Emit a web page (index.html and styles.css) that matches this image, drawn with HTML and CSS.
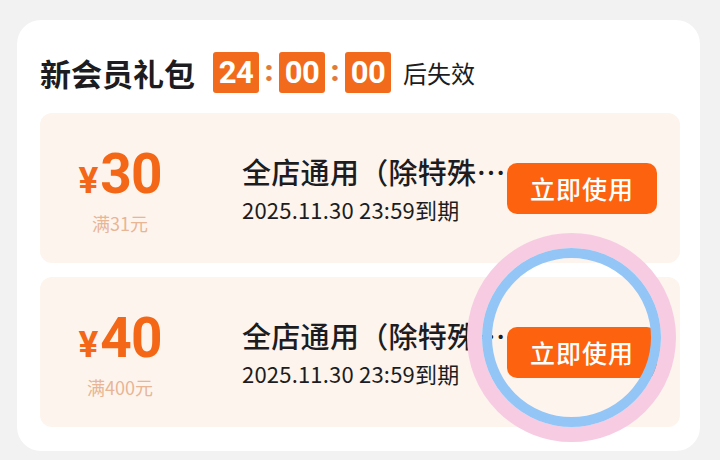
FILE: index.html
```html
<!DOCTYPE html>
<html lang="zh-CN">
<head>
<meta charset="utf-8">
<title>新会员礼包</title>
<link rel="stylesheet" href="styles.css">
</head>
<body>
<div class="card">
  <div class="header">
    <h1 class="title">新会员礼包</h1>
    <div class="countdown">
      <span class="box">24</span><span class="colon">:</span><span class="box">00</span><span class="colon">:</span><span class="box">00</span>
    </div>
    <span class="suffix">后失效</span>
  </div>
  <div class="coupons">
    <div class="coupon">
      <div class="amount">
        <div class="value"><span class="yen">¥</span><span class="num">30</span></div>
        <div class="cond">满31元</div>
      </div>
      <div class="info">
        <div class="name">全店通用（除特殊商品外）</div>
        <div class="date">2025.11.30 23:59到期</div>
      </div>
      <button class="use">立即使用</button>
    </div>
    <div class="coupon">
      <div class="amount">
        <div class="value"><span class="yen">¥</span><span class="num">40</span></div>
        <div class="cond">满400元</div>
      </div>
      <div class="info">
        <div class="name">全店通用（除特殊商品外）</div>
        <div class="date">2025.11.30 23:59到期</div>
      </div>
      <button class="use">立即使用</button>
    </div>
  </div>
  <div class="touch"><div class="touch-inner"></div></div>
</div>
</body>
</html>
```
FILE: styles.css
```css
* { box-sizing: border-box; }
html, body { margin: 0; padding: 0; }
body {
  width: 720px;
  height: 460px;
  background: #f2f2f2;
  font-family: "Noto Sans CJK SC", "Noto Sans", sans-serif;
  color: #1e1e23;
  overflow: hidden;
}
.card {
  position: relative;
  margin: 20px 20px 0 17px;
  width: 683px;
  height: 431px;
  background: #ffffff;
  border-radius: 24px;
  padding: 32px 20px 24px 23px;
}
.header {
  display: flex;
  align-items: center;
  height: 41px;
}
.title {
  margin: 0 18px 0 0;
  font-size: 31px;
  font-weight: 700;
  line-height: 41px;
  color: #1c1c21;
}
.countdown {
  display: flex;
  align-items: center;
}
.box {
  width: 46px;
  height: 41px;
  border-radius: 3px;
  background: #f26a1c;
  color: #ffffff;
  font-family: "Roboto", sans-serif;
  font-weight: 700;
  font-size: 31px;
  line-height: 41px;
  text-align: center;
  letter-spacing: -0.5px;
}
.colon {
  width: 20px;
  text-align: center;
  color: #e27a3c;
  font-family: "Roboto", sans-serif;
  font-weight: 900;
  font-size: 30px;
  line-height: 38px;
  height: 41px;
}
.suffix {
  margin-left: 12px;
  font-size: 24px;
  line-height: 41px;
  color: #1c1c21;
}
.coupons {
  margin-top: 20px;
  display: flex;
  flex-direction: column;
  gap: 14px;
}
.coupon {
  height: 150px;
  background: #fdf4ee;
  border-radius: 12px;
  display: flex;
  align-items: center;
  padding-right: 23px;
}
.amount {
  width: 160px;
  flex: none;
  display: flex;
  flex-direction: column;
  align-items: center;
  padding-top: 4px;
}
.value {
  color: #f36716;
  font-family: "Roboto", sans-serif;
  font-weight: 700;
  line-height: 56px;
  white-space: nowrap;
}
.yen {
  font-size: 37px;
  margin-right: 2px;
}
.num {
  font-size: 55px;
  letter-spacing: -1px;
}
.cond {
  margin-top: -5px;
  font-size: 18px;
  line-height: 24px;
  color: #e8b595;
}
.info {
  flex: 1;
  min-width: 0;
  margin-left: 42px;
  padding-top: 2px;
}
.name {
  font-size: 29px;
  font-weight: 500;
  line-height: 34px;
  letter-spacing: 0.3px;
  white-space: nowrap;
  overflow: hidden;
  text-overflow: ellipsis;
  color: #1c1c21;
}
.date {
  margin-top: 5px;
  font-size: 22px;
  line-height: 32px;
  letter-spacing: 0.2px;
  color: #1c1c21;
  white-space: nowrap;
}
.use {
  flex: none;
  width: 150px;
  height: 51px;
  border: none;
  border-radius: 10px;
  background: #fd630f;
  color: #ffffff;
  font-family: "Noto Sans CJK SC", sans-serif;
  font-size: 25px;
  font-weight: 500;
  padding: 0;
  letter-spacing: 1px;
}
.touch {
  position: absolute;
  left: 450px;
  top: 213px;
  width: 209px;
  height: 209px;
  border-radius: 50%;
  border: 15px solid #f7cce3;
}
.touch-inner {
  width: 100%;
  height: 100%;
  border-radius: 50%;
  border: 10px solid #93c6f6;
}
```
